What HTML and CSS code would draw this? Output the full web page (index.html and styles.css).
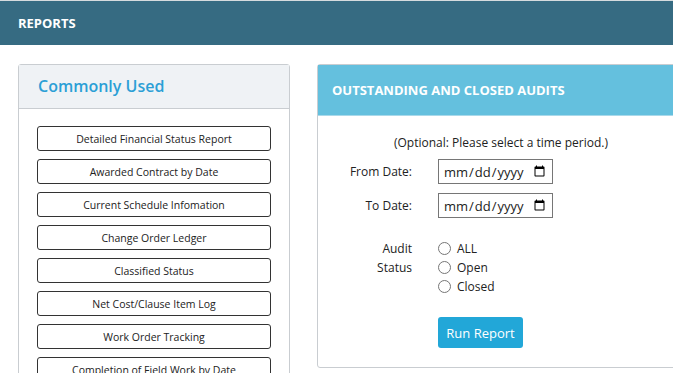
FILE: index.html
```html
<!DOCTYPE html>
<html lang="en">
<head>
    <meta charset="UTF-8">
    <meta name="viewport" content="width=device-width, initial-scale=1.0">
    <title>Reports</title>
    <link rel="stylesheet" href="styles.css">
</head>
<body>
    <header class="topbar">REPORTS</header>

    <main class="content">
        <section class="card card-common">
            <h2 class="card-title">Commonly Used</h2>
            <div class="card-body report-list">
                <button class="report-btn">Detailed Financial Status Report</button>
                <button class="report-btn">Awarded Contract by Date</button>
                <button class="report-btn">Current Schedule Infomation</button>
                <button class="report-btn">Change Order Ledger</button>
                <button class="report-btn">Classified Status</button>
                <button class="report-btn">Net Cost/Clause Item Log</button>
                <button class="report-btn">Work Order Tracking</button>
                <button class="report-btn">Completion of Field Work by Date</button>
            </div>
        </section>

        <section class="card card-audits">
            <h2 class="card-title">OUTSTANDING AND CLOSED AUDITS</h2>
            <form class="card-body audit-form" onsubmit="event.preventDefault();">
                <p class="hint">(Optional: Please select a time period.)</p>

                <div class="form-row">
                    <label for="from_date">From Date:</label>
                    <input type="date" id="from_date" name="from_date">
                </div>
                <div class="form-row">
                    <label for="to_date">To Date:</label>
                    <input type="date" id="to_date" name="to_date">
                </div>

                <div class="form-row status-row">
                    <span class="row-label">Audit<br>Status</span>
                    <div class="radio-group">
                        <label class="radio"><input type="radio" name="status" value="all"> ALL</label>
                        <label class="radio"><input type="radio" name="status" value="open"> Open</label>
                        <label class="radio"><input type="radio" name="status" value="closed"> Closed</label>
                    </div>
                </div>

                <div class="form-row">
                    <span class="row-label"></span>
                    <input type="submit" class="run-btn" value="Run Report">
                </div>
            </form>
        </section>
    </main>
</body>
</html>
```

FILE: styles.css
```css
body {
    font-family: 'Open Sans', 'Noto Sans', sans-serif;
    color: #222;
    margin: 0;
    overflow: hidden;
    background-color: #ffffff;
}

.topbar {
    height: 44px;
    border-top: 1px solid #d6dbde;
    background-color: #366b82;
    color: #ffffff;
    font-size: 13px;
    font-weight: 700;
    line-height: 44px;
    padding-left: 18px;
}

.content {
    display: flex;
    align-items: flex-start;
    gap: 27px;
    padding: 19px 0 0 18px;
}

.card {
    border: 1px solid #c9cdd1;
    border-radius: 3px;
    flex-shrink: 0;
}

.card-title {
    margin: 0;
}

.card-common {
    width: 270px;
    height: 400px;
}

.card-common .card-title {
    height: 43px;
    line-height: 43px;
    padding-left: 19px;
    background-color: #eff2f5;
    border-bottom: 1px solid #c9cdd1;
    color: #2b9fd6;
    font-size: 16px;
    font-weight: 600;
}

.report-list {
    display: flex;
    flex-direction: column;
    gap: 8px;
    padding: 17px 18px;
}

.report-btn {
    width: 234px;
    height: 25px;
    background: #ffffff;
    border: 1px solid #333;
    border-radius: 3px;
    font-family: inherit;
    font-size: 10.5px;
    color: #222;
    padding: 0;
}

.card-audits {
    width: 366px;
}

.card-audits .card-title {
    height: 50px;
    line-height: 50px;
    padding-left: 14px;
    background-color: #64c0de;
    border-bottom: 1px solid #a9d9ea;
    color: #ffffff;
    font-size: 13px;
    font-weight: 700;
}

.audit-form {
    display: flex;
    flex-direction: column;
    padding: 18px 0 19px;
    font-size: 12px;
}

.hint {
    margin: 0 0 7px;
    text-align: center;
    line-height: 18px;
}

.form-row {
    display: flex;
    align-items: center;
    margin-bottom: 9px;
}

.form-row > label,
.row-label {
    width: 94px;
    margin-right: 26px;
    text-align: right;
}

.form-row input[type="date"] {
    width: 115px;
    height: 25px;
    box-sizing: border-box;
    border: 1px solid #767676;
    padding: 0 4px;
    font-family: inherit;
    font-size: 13px;
    color: #222;
    margin: 0;
}

.status-row {
    align-items: flex-start;
    margin: 12px 0 21px;
    line-height: 19px;
}

.radio-group {
    display: flex;
    flex-direction: column;
}

.radio {
    display: flex;
    align-items: center;
    gap: 6px;
    height: 19px;
}

.radio input {
    appearance: none;
    width: 13px;
    height: 13px;
    margin: 0;
    border: 1px solid #767676;
    border-radius: 50%;
    background: #ffffff;
}

.run-btn {
    width: 85px;
    height: 31px;
    margin: 0;
    background-color: #22a7d8;
    color: #ffffff;
    border: none;
    border-radius: 3px;
    font-family: inherit;
    font-size: 13px;
    cursor: pointer;
}

.form-row:last-child {
    margin-bottom: 0;
}
```
